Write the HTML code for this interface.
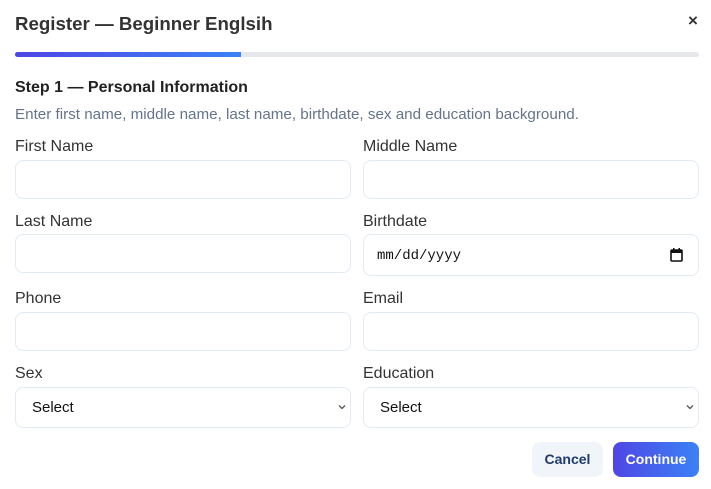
<!DOCTYPE html>
<html><head><style>
*{box-sizing:border-box;margin:0;padding:0}
body{width:711px;height:489px;background:#fff;font-family:"Liberation Sans",Arial,sans-serif;position:relative;overflow:hidden;color:#333}
.a{position:absolute}
.t{left:15px;top:13px;font-size:18.7px;font-weight:bold;color:#333}
.x{left:688px;top:11px;font-size:17px;font-weight:bold;color:#333}
.bar{left:15px;top:52px;width:684px;height:5px;background:#e5e7eb;border-radius:3px;overflow:hidden}
.bar div{width:226px;height:5px;background:linear-gradient(90deg,#4f46e5,#3b82f6)}
.h{left:15px;top:79px;font-size:16px;font-weight:bold;color:#222}
.d{left:15px;top:106px;font-size:15.2px;color:#64748b}
.l{font-size:16px;color:#333}
.i{border:1px solid #e2eaf3;border-radius:8px;background:#fff;width:336px}
.s{font-size:15px;color:#111;padding-left:16px;line-height:40px}
.cb{font-size:14px;font-weight:bold;border-radius:8px;text-align:center;line-height:35px}
</style></head><body>
<div class="a t">Register — Beginner Englsih</div>
<div class="a x">×</div>
<div class="a bar"><div></div></div>
<div class="a h">Step 1 — Personal Information</div>
<div class="a d">Enter first name, middle name, last name, birthdate, sex and education background.</div>

<div class="a l" style="left:15px;top:138px">First Name</div>
<div class="a l" style="left:363px;top:138px">Middle Name</div>
<div class="a i" style="left:15px;top:160px;height:39px"></div>
<div class="a i" style="left:363px;top:160px;height:39px"></div>

<div class="a l" style="left:15px;top:213px">Last Name</div>
<div class="a l" style="left:363px;top:213px">Birthdate</div>
<div class="a i" style="left:15px;top:234px;height:39px"></div>
<div class="a i" style="left:363px;top:234px;height:42px"></div>
<div class="a" style="left:377px;top:248px;font-family:'Liberation Mono',monospace;font-size:14px;color:#111">mm/dd/yyyy</div>
<svg class="a" style="left:670px;top:248px" width="13" height="14" viewBox="0 0 13 14"><rect x="1" y="2" width="11" height="11" rx="1" fill="none" stroke="#111" stroke-width="1.6"/><rect x="1" y="2" width="11" height="3" fill="#111"/><rect x="3" y="0" width="1.5" height="3" fill="#111"/><rect x="8.5" y="0" width="1.5" height="3" fill="#111"/></svg>

<div class="a l" style="left:15px;top:290px">Phone</div>
<div class="a l" style="left:363px;top:290px">Email</div>
<div class="a i" style="left:15px;top:312px;height:39px"></div>
<div class="a i" style="left:363px;top:312px;height:39px"></div>

<div class="a l" style="left:15px;top:365px">Sex</div>
<div class="a l" style="left:363px;top:365px">Education</div>
<div class="a i s" style="left:15px;top:387px;height:41px">Select</div>
<div class="a i s" style="left:363px;top:387px;height:41px">Select</div>
<svg class="a" style="left:338px;top:404px" width="8" height="6" viewBox="0 0 8 6"><path d="M1 1.5L4 4.5L7 1.5" fill="none" stroke="#555" stroke-width="1.3"/></svg>
<svg class="a" style="left:686px;top:404px" width="8" height="6" viewBox="0 0 8 6"><path d="M1 1.5L4 4.5L7 1.5" fill="none" stroke="#555" stroke-width="1.3"/></svg>

<div class="a cb" style="left:532px;top:442px;width:71px;height:35px;background:#f1f5f9;color:#1e3a6e">Cancel</div>
<div class="a cb" style="left:613px;top:442px;width:86px;height:35px;background:linear-gradient(90deg,#4f46e5,#3b82f6);color:#fff">Continue</div>
</body></html>
